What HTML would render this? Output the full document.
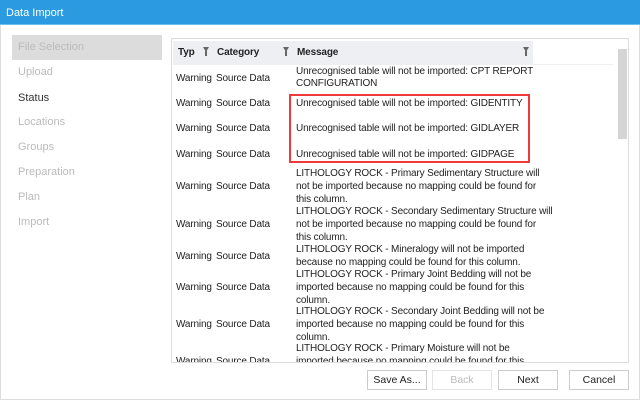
<!DOCTYPE html>
<html><head><style>
*{margin:0;padding:0;box-sizing:border-box}
body{width:640px;height:400px;background:#fff;font-family:"Liberation Sans",sans-serif;font-size:10px;letter-spacing:-0.15px;color:#222;position:relative;overflow:hidden}
.title{position:absolute;left:0;top:0;width:640px;height:25px;background:#2b9ae0;color:#fff;font-size:11px;letter-spacing:0;padding:7px 6px;border-bottom:1px solid #6cc0f0}
.frame{position:absolute;left:0;top:25px;width:640px;height:375px;border:1px solid #ddd;border-top:none}
.nav div{position:absolute;left:18px;color:#bbb;font-size:11px;letter-spacing:0}
.sel{position:absolute;left:12px;top:35px;width:150px;height:25px;background:#dcdcdc}
.grid{position:absolute;left:171px;top:38px;width:458px;height:325px;border:1px solid #ddd;overflow:hidden}
.hdr{position:absolute;top:2px;left:1px;height:23px;width:360px;background:#eeeff3;font-weight:bold;font-size:10px}
.hdr span{position:absolute;top:6px}
.f{position:absolute;top:6px;width:0;height:0;border-left:3.5px solid transparent;border-right:3.5px solid transparent;border-top:5px solid #666}
.f:after{content:"";position:absolute;left:-1px;top:-1px;width:2px;height:5px;background:#666}
.hl{position:absolute;top:25px;left:1px;width:440px;height:1px;background:#eee}
.r{position:absolute;left:0;width:440px;line-height:13px;white-space:nowrap}
.r .a{position:absolute;left:4px}
.r .b{position:absolute;left:44px}
.r .c{position:absolute;left:124px}
.sb{position:absolute;left:446px;top:10px;width:9px;height:90px;background:#d5d5d5}
.red{position:absolute;left:289px;top:94px;width:241px;height:69px;border:2px solid #f03a3a}
.btn{position:absolute;top:370px;height:20px;border:1px solid #ccc;background:#fff;text-align:center;line-height:18px;font-size:10.5px;letter-spacing:0}
</style></head><body>
<div class="title">Data Import</div>
<div class="frame"></div>
<div class="sel"></div>
<div class="nav">
<div style="top:41px">File Selection</div>
<div style="top:66px">Upload</div>
<div style="top:92px;color:#333">Status</div>
<div style="top:116px">Locations</div>
<div style="top:141px">Groups</div>
<div style="top:166px">Preparation</div>
<div style="top:191px">Plan</div>
<div style="top:216px">Import</div>
</div>
<div class="grid">
<div class="hdr"><span style="left:5px">Typ</span><i class="f" style="left:30px"></i><span style="left:44px">Category</span><i class="f" style="left:110px"></i><span style="left:124px">Message</span><i class="f" style="left:350px"></i></div>
<div class="hl"></div>
<div class="r" style="top:27px"><span class="a" style="top:6px">Warning</span><span class="b" style="top:6px">Source Data</span><span class="c" style="line-height:12px">Unrecognised table will not be imported: CPT REPORT<br>CONFIGURATION</span></div>
<div class="r" style="top:58px"><span class="a">Warning</span><span class="b">Source Data</span><span class="c">Unrecognised table will not be imported: GIDENTITY</span></div>
<div class="r" style="top:83px"><span class="a">Warning</span><span class="b">Source Data</span><span class="c">Unrecognised table will not be imported: GIDLAYER</span></div>
<div class="r" style="top:109px"><span class="a">Warning</span><span class="b">Source Data</span><span class="c">Unrecognised table will not be imported: GIDPAGE</span></div>
<div class="r" style="top:128px"><span class="a" style="top:13px">Warning</span><span class="b" style="top:13px">Source Data</span><span class="c">LITHOLOGY ROCK - Primary Sedimentary Structure will<br>not be imported because no mapping could be found for<br>this column.</span></div>
<div class="r" style="top:166px"><span class="a" style="top:13px">Warning</span><span class="b" style="top:13px">Source Data</span><span class="c">LITHOLOGY ROCK - Secondary Sedimentary Structure will<br>not be imported because no mapping could be found for<br>this column.</span></div>
<div class="r" style="top:204px"><span class="a" style="top:7px">Warning</span><span class="b" style="top:7px">Source Data</span><span class="c">LITHOLOGY ROCK - Mineralogy will not be imported<br>because no mapping could be found for this column.</span></div>
<div class="r" style="top:229px"><span class="a" style="top:13px">Warning</span><span class="b" style="top:13px">Source Data</span><span class="c">LITHOLOGY ROCK - Primary Joint Bedding will not be<br>imported because no mapping could be found for this<br>column.</span></div>
<div class="r" style="top:266px"><span class="a" style="top:13px">Warning</span><span class="b" style="top:13px">Source Data</span><span class="c">LITHOLOGY ROCK - Secondary Joint Bedding will not be<br>imported because no mapping could be found for this<br>column.</span></div>
<div class="r" style="top:303px"><span class="a" style="top:13px">Warning</span><span class="b" style="top:13px">Source Data</span><span class="c">LITHOLOGY ROCK - Primary Moisture will not be<br>imported because no mapping could be found for this<br>column.</span></div>
<div class="sb"></div>
</div>
<div class="red"></div>
<div class="btn" style="left:367px;width:60px">Save As...</div>
<div class="btn" style="left:432px;width:60px;color:#bbb;border-color:#e4e4e4">Back</div>
<div class="btn" style="left:498px;width:60px">Next</div>
<div class="btn" style="left:569px;width:60px">Cancel</div>
</body></html>
